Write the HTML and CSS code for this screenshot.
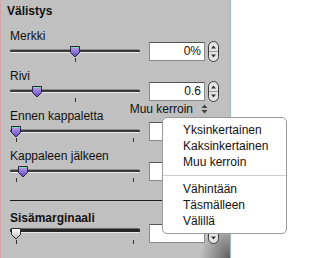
FILE: index.html
```html
<!DOCTYPE html>
<html lang="fi">
<head>
<meta charset="utf-8">
<title>Välistys</title>
<link rel="stylesheet" href="styles.css">
</head>
<body>
<div class="app">
  <section class="panel">
    <h2 class="title">Välistys</h2>

    <div class="field first">
      <div class="label">Merkki</div>
      <div class="ctrl">
        <div class="slider">
          <div class="track"></div>
          <svg class="thumb" style="left:59px" width="12" height="13" viewBox="0 0 12 13"><defs><linearGradient id="g1" x1="0" y1="0" x2="0" y2="1"><stop offset="0" stop-color="#b9a6ec"/><stop offset="1" stop-color="#6244bd"/></linearGradient></defs><path d="M1.5 1.5H10.5V7.5L6 12L1.5 7.5Z" fill="url(#g1)" stroke="#25254a"/><line x1="2" y1="2.5" x2="10" y2="2.5" stroke="#86dca6"/></svg>
          <div class="ticks mid"><i></i></div>
        </div>
        <div class="num">0%</div>
        <svg class="spin" width="11" height="21" viewBox="0 0 11 21"><rect x="0.5" y="0.5" width="10" height="20" rx="5" fill="#e4e4e4" stroke="#3a3a3a"/><path d="M3 7.5L5.5 4.5L8 7.5Z" fill="#333"/><path d="M3 13.5L5.5 16.5L8 13.5Z" fill="#333"/><line x1="1" y1="10.5" x2="10" y2="10.5" stroke="#9a9a9a"/></svg>
      </div>
    </div>

    <div class="field">
      <div class="label">Rivi</div>
      <div class="ctrl">
        <div class="slider">
          <div class="track"></div>
          <svg class="thumb" style="left:21px" width="12" height="13" viewBox="0 0 12 13"><defs><linearGradient id="g2" x1="0" y1="0" x2="0" y2="1"><stop offset="0" stop-color="#b9a6ec"/><stop offset="1" stop-color="#6244bd"/></linearGradient></defs><path d="M1.5 1.5H10.5V7.5L6 12L1.5 7.5Z" fill="url(#g2)" stroke="#25254a"/><line x1="2" y1="2.5" x2="10" y2="2.5" stroke="#86dca6"/></svg>
          <div class="ticks mid"><i></i></div>
        </div>
        <div class="num">0.6</div>
        <svg class="spin" width="11" height="21" viewBox="0 0 11 21"><rect x="0.5" y="0.5" width="10" height="20" rx="5" fill="#e4e4e4" stroke="#3a3a3a"/><path d="M3 7.5L5.5 4.5L8 7.5Z" fill="#333"/><path d="M3 13.5L5.5 16.5L8 13.5Z" fill="#333"/><line x1="1" y1="10.5" x2="10" y2="10.5" stroke="#9a9a9a"/></svg>
      </div>
      <div class="popup"><span>Muu kerroin</span><svg width="7" height="10" viewBox="0 0 7 10"><path d="M0.5 4L3.5 0.5L6.5 4Z" fill="#444"/><path d="M0.5 6L3.5 9.5L6.5 6Z" fill="#444"/></svg></div>
    </div>

    <div class="field">
      <div class="label">Ennen kappaletta</div>
      <div class="ctrl">
        <div class="slider">
          <div class="track"></div>
          <svg class="thumb" style="left:0px" width="12" height="13" viewBox="0 0 12 13"><defs><linearGradient id="g3" x1="0" y1="0" x2="0" y2="1"><stop offset="0" stop-color="#b9a6ec"/><stop offset="1" stop-color="#6244bd"/></linearGradient></defs><path d="M1.5 1.5H10.5V7.5L6 12L1.5 7.5Z" fill="url(#g3)" stroke="#25254a"/><line x1="2" y1="2.5" x2="10" y2="2.5" stroke="#86dca6"/></svg>
          <div class="ticks"><i></i><i></i></div>
        </div>
        <div class="num"></div>
        <svg class="spin" width="11" height="21" viewBox="0 0 11 21"><rect x="0.5" y="0.5" width="10" height="20" rx="5" fill="#e4e4e4" stroke="#3a3a3a"/><path d="M3 7.5L5.5 4.5L8 7.5Z" fill="#333"/><path d="M3 13.5L5.5 16.5L8 13.5Z" fill="#333"/><line x1="1" y1="10.5" x2="10" y2="10.5" stroke="#9a9a9a"/></svg>
      </div>
    </div>

    <div class="field">
      <div class="label">Kappaleen jälkeen</div>
      <div class="ctrl">
        <div class="slider">
          <div class="track"></div>
          <svg class="thumb" style="left:7px" width="12" height="13" viewBox="0 0 12 13"><defs><linearGradient id="g4" x1="0" y1="0" x2="0" y2="1"><stop offset="0" stop-color="#b9a6ec"/><stop offset="1" stop-color="#6244bd"/></linearGradient></defs><path d="M1.5 1.5H10.5V7.5L6 12L1.5 7.5Z" fill="url(#g4)" stroke="#25254a"/><line x1="2" y1="2.5" x2="10" y2="2.5" stroke="#86dca6"/></svg>
          <div class="ticks"><i></i><i></i></div>
        </div>
        <div class="num"></div>
        <svg class="spin" width="11" height="21" viewBox="0 0 11 21"><rect x="0.5" y="0.5" width="10" height="20" rx="5" fill="#e4e4e4" stroke="#3a3a3a"/><path d="M3 7.5L5.5 4.5L8 7.5Z" fill="#333"/><path d="M3 13.5L5.5 16.5L8 13.5Z" fill="#333"/><line x1="1" y1="10.5" x2="10" y2="10.5" stroke="#9a9a9a"/></svg>
      </div>
    </div>

    <hr class="sep">

    <div class="field inset">
      <div class="label bold">Sisämarginaali</div>
      <div class="ctrl">
        <div class="slider">
          <div class="track thick"></div>
          <svg class="thumb" style="left:0px" width="12" height="13" viewBox="0 0 12 13"><defs><linearGradient id="g5" x1="0" y1="0" x2="0" y2="1"><stop offset="0" stop-color="#ffffff"/><stop offset="1" stop-color="#bcbcbc"/></linearGradient></defs><path d="M1.5 1.5H10.5V7.5L6 12L1.5 7.5Z" fill="url(#g5)" stroke="#2a2a2a"/></svg>
          <div class="ticks low"><i></i><i></i></div>
        </div>
        <div class="num"></div>
        <svg class="spin" width="11" height="21" viewBox="0 0 11 21"><rect x="0.5" y="0.5" width="10" height="20" rx="5" fill="#e4e4e4" stroke="#3a3a3a"/><path d="M3 7.5L5.5 4.5L8 7.5Z" fill="#333"/><path d="M3 13.5L5.5 16.5L8 13.5Z" fill="#333"/><line x1="1" y1="10.5" x2="10" y2="10.5" stroke="#9a9a9a"/></svg>
      </div>
    </div>
  </section>
  <div class="side"></div>
</div>

<ul class="menu">
  <li>Yksinkertainen</li>
  <li>Kaksinkertainen</li>
  <li>Muu kerroin</li>
  <li class="divider"></li>
  <li>Vähintään</li>
  <li>Täsmälleen</li>
  <li>Välillä</li>
</ul>
</body>
</html>
```

FILE: styles.css
```css
html, body {
  margin: 0;
  padding: 0;
}

body {
  width: 290px;
  height: 258px;
  overflow: hidden;
  position: relative;
  background: #ffffff;
  font-family: "Liberation Sans", Arial, sans-serif;
  font-size: 12px;
  color: #111;
}

.app {
  display: flex;
  height: 258px;
}

.panel {
  width: 231px;
  box-sizing: border-box;
  border-left: 1px solid #d3a3aa;
  border-right: 1px solid #97c3c6;
  background:
    radial-gradient(ellipse 30px 36px at 229px 258px, rgba(0, 0, 0, 0.5), rgba(0, 0, 0, 0)) no-repeat,
    #c0c0c0;
  padding-top: 4px;
  display: flex;
  flex-direction: column;
}

.side {
  flex: 1;
  background: #ffffff;
}

.title {
  margin: 0;
  padding-left: 6px;
  font-size: 12px;
  font-weight: bold;
  line-height: 14px;
  height: 14px;
}

.field {
  padding-left: 9px;
  margin-bottom: 7px;
}

.field.first {
  margin-top: 11px;
}

.field.inset {
  margin-top: 10px;
}

.label {
  height: 12px;
  line-height: 14px;
  white-space: nowrap;
}

.label.bold {
  font-weight: bold;
}

.ctrl {
  display: flex;
  align-items: center;
  height: 21px;
}

.slider {
  position: relative;
  width: 130px;
  height: 21px;
  flex: none;
}

.track {
  margin-top: 8px;
  height: 4px;
  border-radius: 2px;
  background: linear-gradient(to bottom, #8c8c8c 0 1px, #3a3a3a 1px 3px, #eeeeee 3px 4px);
}

.track.thick {
  margin-top: 5px;
  height: 5px;
  background: linear-gradient(to bottom, #6a6a6a 0 1px, #262626 1px 4px, #e8e8e8 4px 5px);
}

.thumb {
  position: absolute;
  top: 4px;
  display: block;
}

.ticks {
  display: flex;
  justify-content: space-between;
  padding: 0 6px;
  margin-top: 5px;
  height: 4px;
}

.ticks.mid {
  justify-content: center;
}

.ticks.low {
  margin-top: 7px;
}

.ticks i {
  display: block;
  width: 1px;
  height: 4px;
  background: #333;
}

.num {
  margin-left: 9px;
  width: 56px;
  height: 19px;
  box-sizing: border-box;
  background: #ffffff;
  border: 1px solid #8a8a8a;
  border-top-color: #555;
  text-align: right;
  padding-right: 3px;
  line-height: 17px;
  white-space: nowrap;
  overflow: hidden;
}

.spin {
  margin-left: 3px;
  display: block;
  flex: none;
}

.popup {
  width: 198px;
  height: 14px;
  line-height: 14px;
  margin-bottom: -14px;
  display: flex;
  justify-content: flex-end;
  align-items: center;
  gap: 8px;
}

.popup svg {
  display: block;
}

.sep {
  margin: 11px 0 0 9px;
  width: 211px;
  height: 1px;
  border: 0;
  background: #1e1e1e;
  flex: none;
}

.menu {
  position: absolute;
  left: 162px;
  top: 117px;
  width: 125px;
  box-sizing: border-box;
  margin: 0;
  padding: 4px 0;
  list-style: none;
  background: #ffffff;
  border: 1px solid #9a9a9a;
  border-radius: 5px;
}

.menu li {
  line-height: 16px;
  height: 16px;
  padding-left: 20px;
  white-space: nowrap;
}

.menu li.divider {
  height: 1px;
  margin: 5px 0;
  padding: 0;
  background: #cfcfcf;
}
```
